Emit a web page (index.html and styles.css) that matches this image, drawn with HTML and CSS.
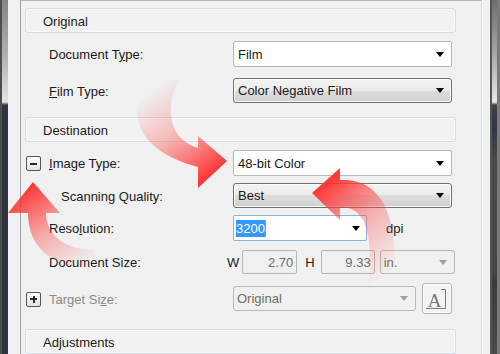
FILE: index.html
```html
<!DOCTYPE html>
<html>
<head>
<meta charset="utf-8">
<link rel="stylesheet" href="styles.css">
</head>
<body>
<div class="screen">
  <div class="edge-left"></div>
  <div class="panel">
    <div class="group">Original</div>

    <div class="row r-doc">
      <div class="label">Document T<u>y</u>pe:</div>
      <div class="combo"><span>Film</span><i class="caret"></i></div>
    </div>
    <div class="row r-film">
      <div class="label"><u>F</u>ilm Type:</div>
      <div class="combo btn"><span>Color Negative Film</span><i class="caret"></i></div>
    </div>

    <div class="group g-dest">Destination</div>

    <div class="row r-img">
      <div class="label tog"><span class="toggle minus"></span><span class="txt"><u>I</u>mage Type:</span></div>
      <div class="combo"><span>48-bit Color</span><i class="caret"></i></div>
    </div>
    <div class="row r-qual">
      <div class="label sub">Scanning Quality:</div>
      <div class="combo btn"><span>Best</span><i class="caret"></i></div>
    </div>
    <div class="row r-res">
      <div class="label">Reso<u>l</u>ution:</div>
      <div class="ctl">
        <div class="combo edit"><span class="sel">3200</span><i class="cursor"></i><i class="caret"></i></div>
        <span class="dpi">dpi</span>
      </div>
    </div>
    <div class="row r-size">
      <div class="label">Document Size:</div>
      <div class="ctl">
        <span class="dim">W</span>
        <div class="num w">2.70</div>
        <span class="dim h">H</span>
        <div class="num hbox">9.33</div>
        <div class="combo dis unit"><span>in.</span><i class="caret"></i></div>
      </div>
    </div>
    <div class="row r-target">
      <div class="label tog disabled"><span class="toggle plus"></span><span class="txt">Target Si<u>z</u>e:</span></div>
      <div class="ctl">
        <div class="combo dis target"><span>Original</span><i class="caret"></i></div>
        <div class="abtn">
          <svg width="28" height="29" viewBox="0 0 28 29">
            <text x="11.5" y="23" text-anchor="middle" class="atext">A</text>
            <path d="M18 5.5H22.5V24.5H3" fill="none" stroke="#7a7a7a" stroke-width="1"/>
          </svg>
        </div>
      </div>
    </div>

    <div class="group g-adj">Adjustments</div>
  </div>
  <div class="edge-right"></div>

  <svg class="arrows" width="500" height="354" viewBox="0 0 500 354">
    <defs>
      <linearGradient id="g1" gradientUnits="userSpaceOnUse" x1="160" y1="84" x2="222" y2="165">
        <stop offset="0" stop-color="#ff4a4a" stop-opacity="0"/>
        <stop offset="0.45" stop-color="#ff4a4a" stop-opacity="0.32"/>
        <stop offset="1" stop-color="#ff3030" stop-opacity="0.95"/>
      </linearGradient>
      <linearGradient id="g2" gradientUnits="userSpaceOnUse" x1="34" y1="185" x2="86" y2="264">
        <stop offset="0" stop-color="#ff3030" stop-opacity="0.95"/>
        <stop offset="0.5" stop-color="#ff4a4a" stop-opacity="0.42"/>
        <stop offset="1" stop-color="#ff4a4a" stop-opacity="0"/>
      </linearGradient>
      <linearGradient id="g3" gradientUnits="userSpaceOnUse" x1="315" y1="193" x2="382" y2="278">
        <stop offset="0" stop-color="#ff3030" stop-opacity="0.95"/>
        <stop offset="0.45" stop-color="#ff4a4a" stop-opacity="0.4"/>
        <stop offset="1" stop-color="#ff4a4a" stop-opacity="0"/>
      </linearGradient>
    </defs>
    <path d="M150 80 C126 110 134 150 198 167 L198 188 L227 161 L198 136 L198 148 C170 140 164 110 178 80 Z" fill="url(#g1)"/>
    <path d="M33 182 L8 213 L28 213 C28 250 55 268 95 268 L95 250 C66 250 46 236 46 213 L60 213 Z" fill="url(#g2)"/>
    <path d="M312 193 L340 168 L340 180 C382 178 400 215 394 292 L368 292 C374 232 366 207 340 207 L340 220 Z" fill="url(#g3)"/>
  </svg>
</div>
</body>
</html>
```

FILE: styles.css
```css
* { box-sizing: border-box; }

body {
  margin: 0;
  font-family: "Liberation Sans", Arial, sans-serif;
  font-size: 13px;
  color: #1a1a1a;
}

.screen {
  position: relative;
  width: 500px;
  height: 354px;
  overflow: hidden;
  background: #f0f0f0;
  display: flex;
}

.edge-left {
  flex: none;
  width: 8px;
  margin-right: 12px;
  background:
    linear-gradient(to right, #4e4e4e 0 2px, transparent 2px),
    linear-gradient(to bottom, #858585 0, #b0b0b0 55px, #e4e4e4 102px, #2f353e 105px, #2f353e 100%);
}

.edge-right {
  flex: none;
  width: 10px;
  margin-left: 8px;
  background:
    linear-gradient(to right, #555 0 2px, transparent 2px 7px, #7a7a7a 7px),
    linear-gradient(to bottom, #6e6e6e 0, #a8a8a8 55px, #e8e8e8 102px, #3d4048 105px, #2f3645 130px, #4a4a4a 160px, #454545 270px, #3a3a3a 280px, #4a4a4a 100%);
}

.panel {
  flex: none;
  width: 462px;
  border-left: 1px solid #a0a0a0;
  border-top: 1px solid #b4b4b4;
  border-right: 1px solid #dadada;
  box-shadow: 1px 0 0 #ffffff;
  padding: 7px 0 0 4px;
  display: flex;
  flex-direction: column;
}

.group {
  flex: none;
  width: 431px;
  height: 25px;
  border: 1px solid #d4dde5;
  border-radius: 3px;
  background: #f2f2f2;
  box-shadow: inset 0 0 0 1px #f8f8f8;
  padding: 2px 0 0 17px;
  display: flex;
  align-items: center;
}

.g-dest { margin-top: 14px; }
.g-adj { margin-top: 15px; }

.row {
  flex: none;
  display: grid;
  grid-template-columns: 208px 219px;
  align-items: center;
}

.label { padding-left: 24px; padding-top: 1px; white-space: nowrap; }
.label.sub { padding-left: 36px; }
.label.tog { padding-left: 1px; display: flex; align-items: center; }
.label.tog .txt { margin-left: 8px; }
.label.disabled .txt { color: #8a8a8a; }

u { text-decoration: underline; text-underline-offset: 1px; }

.r-doc { margin-top: 8px; height: 26px; }
.r-film { margin-top: 11px; height: 25px; }
.r-img { margin-top: 8px; height: 26px; }
.r-qual { margin-top: 7px; height: 25px; }
.r-res { margin-top: 7px; height: 26px; }
.r-size { margin-top: 9px; height: 24px; grid-template-columns: 202px auto; }
.r-target { margin-top: 9px; height: 31px; }

.toggle {
  flex: none;
  position: relative;
  width: 15px;
  height: 15px;
  border: 1px solid #555;
  border-radius: 2px;
  background: linear-gradient(#fdfdfd, #e2e2e2);
}
.toggle::before {
  content: "";
  position: absolute;
  left: 3px;
  top: 5.5px;
  width: 7px;
  height: 0;
  border-top: 2px solid #2a2a2a;
}
.toggle.plus::after {
  content: "";
  position: absolute;
  left: 5.5px;
  top: 3px;
  height: 7px;
  width: 0;
  border-left: 2px solid #2a2a2a;
}

.combo {
  position: relative;
  height: 100%;
  border: 1px solid #b9b9b9;
  border-radius: 2px;
  background: #ffffff;
  display: flex;
  align-items: center;
  padding-left: 4px;
  white-space: nowrap;
}

.combo.btn {
  border-color: #707070;
  border-radius: 3px;
  background: linear-gradient(#f3f3f3, #ebebeb 50%, #dddddd 50%, #d0d0d0);
  box-shadow: inset 0 0 0 1px #fafafa;
}

.caret {
  margin-left: auto;
  margin-right: 7px;
  width: 0;
  height: 0;
  border-left: 4px solid transparent;
  border-right: 4px solid transparent;
  border-top: 5px solid #000;
}

.ctl { display: flex; align-items: center; height: 100%; }

.combo.edit {
  width: 134px;
  border-color: #84b4e0;
  padding-left: 2px;
}
.sel {
  background: #3399ff;
  color: #fff;
  line-height: 17px;
}
.cursor {
  width: 1px;
  height: 17px;
  background: #e08a2a;
}
.combo.edit .caret { margin-right: 6px; }

.dpi { margin-left: 19px; }

.dim.h { margin-left: 8px; }

.num {
  height: 100%;
  border: 1px solid #b5b5b5;
  border-radius: 2px;
  background: #f0f0f0;
  color: #6d6d6d;
  padding-right: 3px;
  display: flex;
  align-items: center;
  justify-content: flex-end;
}
.num.w { width: 55px; margin-left: 3px; }
.num.hbox { width: 54px; margin-left: 6px; }

.combo.dis {
  background: #f0f0f0;
  border-color: #b8b8b8;
  border-radius: 3px;
  color: #6d6d6d;
  padding-left: 3px;
}
.combo.dis .caret { border-top-color: #a0a0a0; }

.combo.unit { width: 75px; margin-left: 5px; }
.combo.target { width: 185px; height: 25px; }

.abtn {
  position: relative;
  width: 30px;
  height: 31px;
  margin-left: 6px;
  border: 1px solid #b5b5b5;
  border-radius: 3px;
  background: #f3f3f3;
  box-shadow: inset 0 0 0 1px #fbfbfb;
}
.abtn svg { position: absolute; left: 0; top: 0; }
.atext {
  font-family: "Liberation Serif", "Times New Roman", serif;
  font-size: 19px;
  fill: #7a7a7a;
}

.arrows {
  position: absolute;
  left: 0;
  top: 0;
  pointer-events: none;
}
```
